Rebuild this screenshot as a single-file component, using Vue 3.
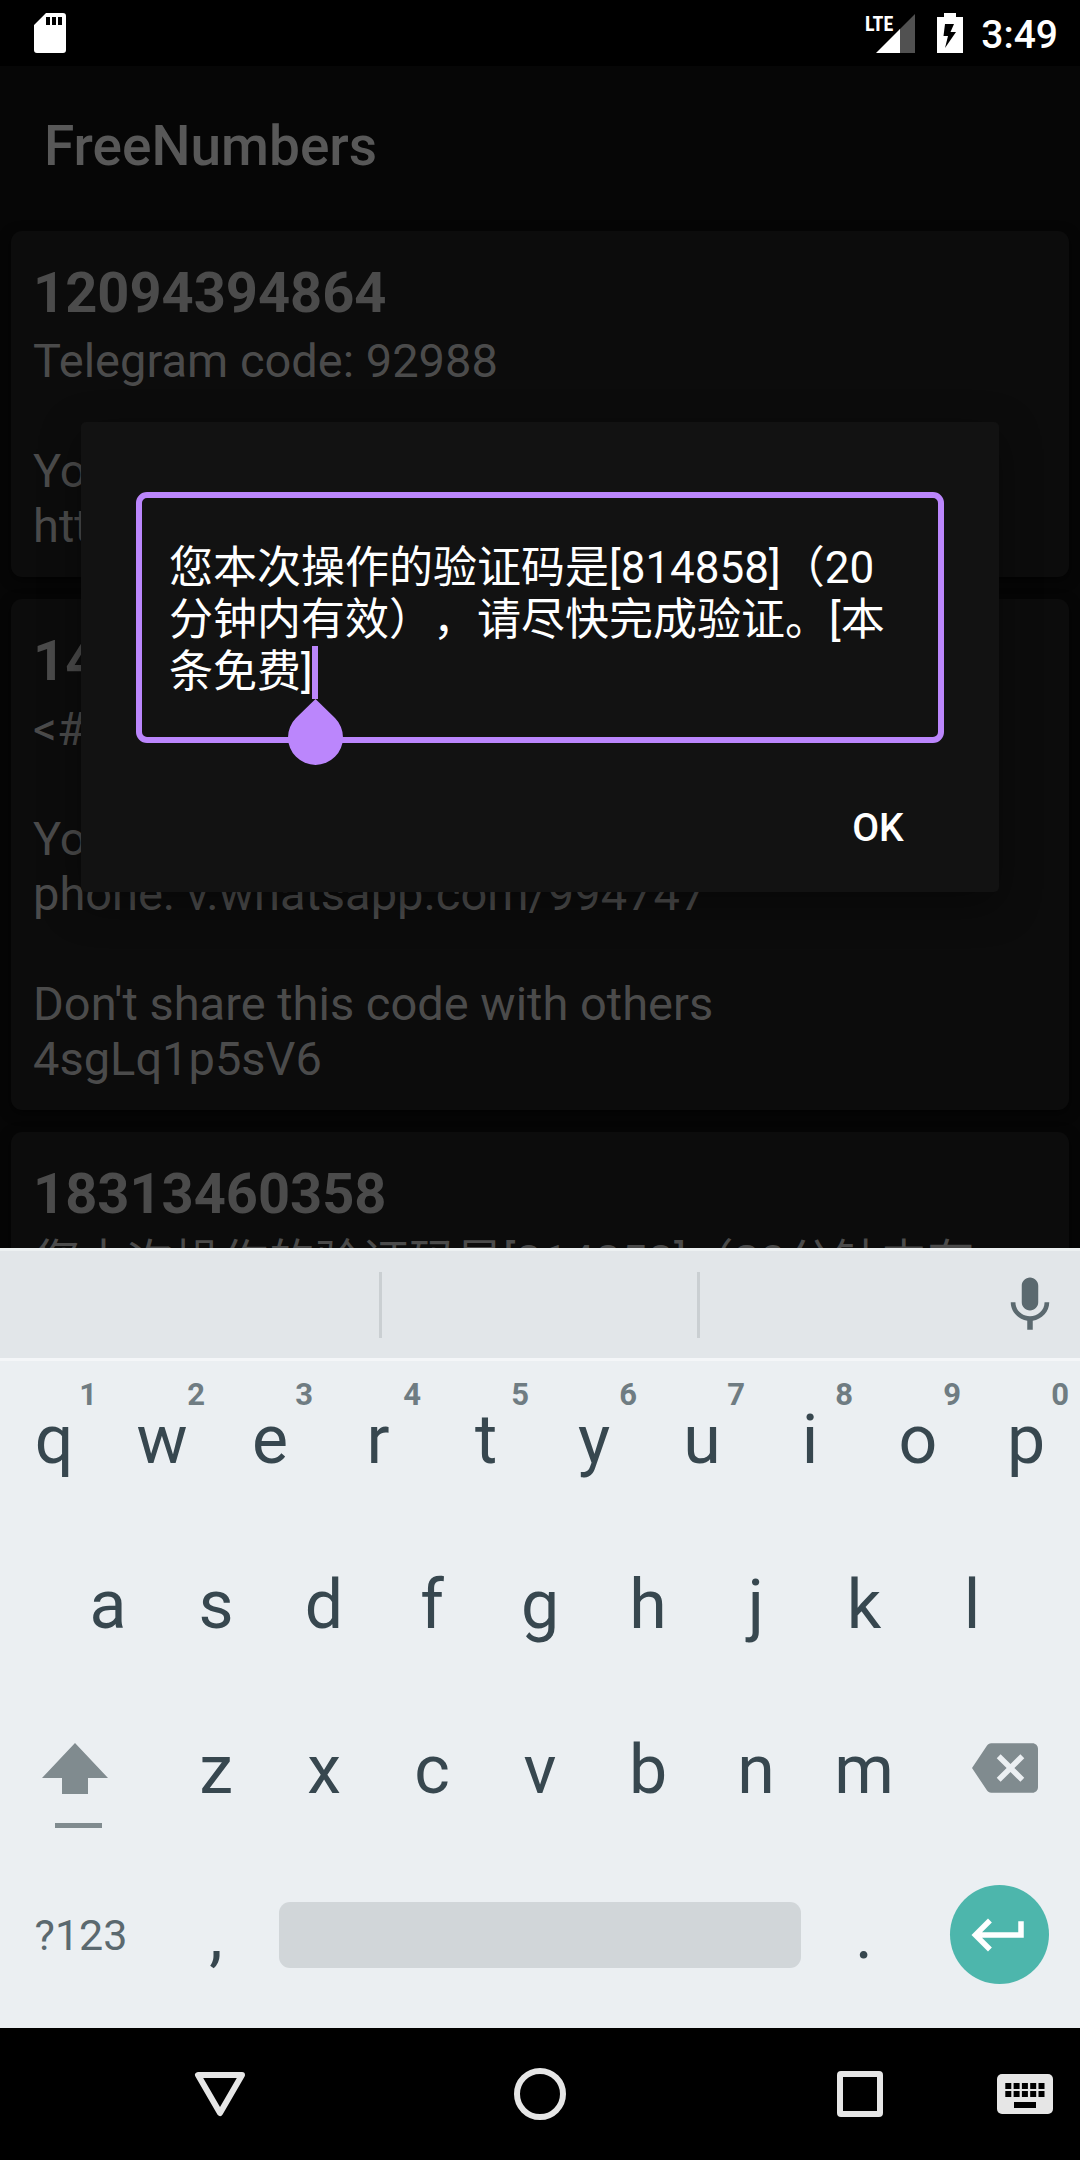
<script setup>
import { ref } from 'vue'

const messages = [
  {
    number: '12094394864',
    body: 'Telegram code: 92988\n\nYou can also tap on this link to log in:\nhttps://t.me/login/92988',
  },
  {
    number: '14094394864',
    body: "<#> WhatsApp code: 994-747\n\nYou can tap this link to verify your\nphone: v.whatsapp.com/994747\n\nDon't share this code with others\n4sgLq1p5sV6",
  },
  {
    number: '18313460358',
    body: '您本次操作的验证码是[814858]（20分钟内有效），请尽快完成验证。[本条免费]',
  },
]

const draft = ref('您本次操作的验证码是[814858]（20分钟内有效），请尽快完成验证。[本条免费]')

const topRow = [...'qwertyuiop'].map((letter, i) => ({ letter, hint: (i + 1) % 10 }))
const homeRow = [...'asdfghjkl']
const bottomRow = [...'zxcvbnm']
</script>

<template>
  <div class="screen">
    <header class="status">
      <svg class="sd" viewBox="0 0 32 40" aria-label="SD card">
        <path fill="#fff" fill-rule="evenodd" d="M12 0H29Q32 0 32 3V37Q32 40 29 40H3Q0 40 0 37V12ZM12 4V12H16V4ZM18 4V12H22V4ZM24 4V12H28V4Z" />
      </svg>
      <div class="indicators">
        <div class="signal">
          <svg viewBox="0 0 39 39" aria-hidden="true">
            <path fill="#515151" d="M39 0V39H23V16Z" />
            <path fill="#fff" d="M24 15V39H0Z" />
          </svg>
          <span class="lte">LTE</span>
        </div>
        <svg class="battery" viewBox="0 0 26 40" aria-label="Charging">
          <path fill="#fff" d="M7 0H19V4H26V40H0V4H7Z" />
          <path fill="#000" d="M8 11H17L13.500 19H19L8 35L11 23H6.500Z" />
        </svg>
        <time class="clock">3:49</time>
      </div>
    </header>

    <main class="app">
      <h1 class="title">FreeNumbers</h1>
      <section class="list">
        <article v-for="m in messages" :key="m.number" class="card">
          <h2 class="number">{{ m.number }}</h2>
          <p class="body">{{ m.body }}</p>
        </article>
      </section>

      <div class="overlay">
        <div class="dialog" role="dialog" aria-label="Message">
          <div class="field">
            <textarea v-model="draft" class="input" rows="3" aria-label="Message text" spellcheck="false"></textarea>
            <span class="caret"></span>
            <svg class="handle" viewBox="0 0 55 66" aria-hidden="true">
              <path fill="#bb86fc" d="M27.500 0L47 19A27.500 27.500 0 1 1 8 19Z" />
            </svg>
          </div>
          <div class="actions">
            <button type="button" class="ok">OK</button>
          </div>
        </div>
      </div>
    </main>

    <section class="keyboard" aria-label="Keyboard">
      <div class="suggestions">
        <span class="slot"></span>
        <span class="slot"></span>
        <button type="button" class="mic" aria-label="Voice input">
          <svg class="icon" viewBox="0 0 24 24">
            <path fill="#5b696f" d="M12 14c1.660 0 2.990-1.340 2.990-3L15 5c0-1.660-1.340-3-3-3S9 3.340 9 5v6c0 1.660 1.340 3 3 3zm5.300-3c0 3-2.540 5.100-5.300 5.100S6.700 14 6.700 11H5c0 3.410 2.720 6.230 6 6.720V21h2v-3.280c3.280-.48 6-3.300 6-6.720h-1.700z" />
          </svg>
        </button>
      </div>
      <div class="row">
        <button v-for="k in topRow" :key="k.letter" type="button" class="key">
          {{ k.letter }}<span class="hint">{{ k.hint }}</span>
        </button>
      </div>
      <div class="row home-row">
        <button v-for="k in homeRow" :key="k" type="button" class="key">{{ k }}</button>
      </div>
      <div class="row">
        <button type="button" class="key wide shift" aria-label="Shift">
          <svg class="shift-icon" viewBox="0 0 66 86">
            <path fill="#808b8f" d="M33 0L66 35H46V51H20V35H0ZM13 80H60V85H13Z" />
          </svg>
        </button>
        <button v-for="k in bottomRow" :key="k" type="button" class="key">{{ k }}</button>
        <button type="button" class="key wide backspace" aria-label="Backspace">
          <svg class="icon" viewBox="0 0 24 24">
            <path fill="#808b8f" d="M22 3H7c-.69 0-1.230.35-1.590.88L0 12l5.410 8.110c.36.53.9.89 1.590.89h15c1.100 0 2-.9 2-2V5c0-1.100-.9-2-2-2zm-3 12.590L17.590 17 14 13.410 10.410 17 9 15.590 12.590 12 9 8.410 10.410 7 14 10.590 17.590 7 19 8.410 15.410 12 19 15.590z" />
          </svg>
        </button>
      </div>
      <div class="row">
        <button type="button" class="key wide symbols">?123</button>
        <button type="button" class="key">,</button>
        <button type="button" class="key space" aria-label="Space"><span class="space-bar"></span></button>
        <button type="button" class="key">.</button>
        <button type="button" class="key wide" aria-label="Enter">
          <span class="enter">
            <svg class="icon" viewBox="0 0 24 24">
              <path fill="#fff" d="M19 7v4H5.830l3.580-3.590L8 6l-6 6 6 6 1.410-1.410L5.830 13H21V7z" />
            </svg>
          </span>
        </button>
      </div>
    </section>

    <nav class="nav">
      <button type="button" class="nav-button back" aria-label="Back">
        <svg width="52" height="46" viewBox="0 0 52 46">
          <path fill="none" stroke="#e6e6e6" stroke-width="6" stroke-linejoin="round" d="M4 4H48L26 42Z" />
        </svg>
      </button>
      <button type="button" class="nav-button" aria-label="Home">
        <svg width="52" height="52" viewBox="0 0 52 52">
          <circle cx="26" cy="26" r="23" fill="none" stroke="#e6e6e6" stroke-width="6" />
        </svg>
      </button>
      <button type="button" class="nav-button" aria-label="Recent apps">
        <svg width="46" height="46" viewBox="0 0 46 46">
          <rect x="3" y="3" width="40" height="40" rx="1" fill="none" stroke="#e6e6e6" stroke-width="6" stroke-linejoin="round" />
        </svg>
      </button>
      <button type="button" class="nav-button" aria-label="Switch keyboard">
        <svg width="56" height="40" viewBox="0 0 56 40">
          <rect width="56" height="40" rx="5" fill="#e6e6e6" />
          <template v-for="c in 5" :key="c">
            <rect :x="c * 8.3" y="9" width="6" height="6" />
            <rect :x="c * 8.3" y="17" width="6" height="6" />
          </template>
          <rect x="17" y="28" width="22" height="6" />
        </svg>
      </button>
    </nav>
  </div>
</template>

<style>
body {
  background: #000;
}
</style>

<style scoped>
.screen {
  display: flex;
  flex-direction: column;
  height: 100vh;
  font-family: Roboto, "Noto Sans CJK SC", sans-serif;
  text-spacing-trim: space-all;
  background: #000;
  overflow: hidden;
}

button {
  margin: 0;
  padding: 0;
  border: 0;
  background: none;
  font-family: inherit;
  color: inherit;
}

svg {
  display: block;
}

.status {
  flex: none;
  display: flex;
  align-items: center;
  justify-content: space-between;
  height: 66px;
  padding: 0 22px 0 34px;
  box-sizing: border-box;
  color: #fff;
}

.sd {
  width: 32px;
  height: 40px;
}

.indicators {
  display: flex;
  align-items: center;
  gap: 22px;
}

.signal {
  position: relative;
}

.signal svg {
  width: 39px;
  height: 39px;
}

.lte {
  position: absolute;
  top: 0;
  right: 22px;
  font: bold 20px/20px "Roboto Condensed", "Liberation Sans Narrow", Roboto, sans-serif;
}

.battery {
  width: 26px;
  height: 40px;
}

.clock {
  padding-top: 3px;
  font-size: 39px;
  font-weight: 500;
  line-height: 46px;
  margin-left: -4px;
}

.app {
  flex: 1 1 0;
  min-height: 0;
  position: relative;
  overflow: hidden;
  background: #060606;
}

.title {
  margin: 0;
  padding: 0 44px;
  font-size: 55px;
  font-weight: 500;
  line-height: 160px;
  color: #585858;
}

.list {
  display: flex;
  flex-direction: column;
  gap: 22px;
  padding: 5px 11px;
}

.card {
  padding: 22px 22px 24px;
  border-radius: 11px;
  background: #0c0c0c;
  box-shadow: 0 3px 12px rgba(0, 0, 0, 0.6);
  color: #4b4b4b;
}

.number {
  margin: 0;
  font-size: 56px;
  font-weight: 700;
  line-height: 80px;
}

.body {
  margin: 0;
  font-size: 47px;
  line-height: 55px;
  white-space: pre-line;
}

.overlay {
  position: absolute;
  inset: 0;
  display: flex;
  align-items: center;
  padding: 0 81px;
}

.dialog {
  flex: 1;
  padding: 70px 55px 15px;
  border-radius: 5px;
  background: #121212;
  box-shadow: 0 12px 40px rgba(0, 0, 0, 0.4);
}

.field {
  position: relative;
}

.input {
  display: block;
  width: 100%;
  box-sizing: border-box;
  margin: 0;
  padding: 44px 27px 39px;
  border: 6px solid #bb86fc;
  border-radius: 11px;
  outline: 0;
  background: transparent;
  color: #fff;
  font-family: inherit;
  font-size: 44px;
  line-height: 52px;
  text-spacing-trim: space-all;
  resize: none;
  overflow: hidden;
}

.caret {
  position: absolute;
  left: 176px;
  top: 154px;
  width: 6px;
  height: 53px;
  background: #bb86fc;
}

.handle {
  position: absolute;
  left: 152px;
  top: 207px;
  width: 55px;
  height: 66px;
}

.actions {
  display: flex;
  justify-content: flex-end;
  margin: 35px -22px 0;
}

.ok {
  width: 176px;
  height: 99px;
  font-size: 39px;
  font-weight: 500;
  color: #fff;
}

.keyboard {
  flex: none;
  padding-bottom: 7px;
  background: #ebeff2;
  color: #37474f;
}

.suggestions {
  display: grid;
  grid-template-columns: 382fr 318fr 380fr;
  align-items: center;
  height: 113px;
  box-sizing: border-box;
  border-top: 3px solid #edf1f2;
  border-bottom: 3px solid #f4f6f8;
  background: #e2e6e9;
}

.slot {
  height: 66px;
  border-right: 3px solid #cacfd2;
}

.mic {
  justify-self: end;
  padding-right: 17px;
}

.icon {
  width: 66px;
  height: 66px;
}

.row {
  display: flex;
}

.home-row {
  padding: 0 5%;
}

.key {
  position: relative;
  flex: 2 1 0;
  display: flex;
  align-items: center;
  justify-content: center;
  min-width: 0;
  height: 165px;
  padding-bottom: 8px;
  font-size: 68px;
  line-height: 80px;
}

.wide {
  flex-grow: 3;
}

.shift {
  align-items: flex-start;
  padding-top: 52px;
}

.shift-icon {
  width: 66px;
  height: 86px;
  margin-right: 12px;
}

.backspace {
  padding-bottom: 11px;
}

.backspace .icon {
  margin-left: 12px;
}

.hint {
  position: absolute;
  top: 16px;
  right: 11px;
  font-size: 31px;
  font-weight: 700;
  line-height: 36px;
  color: #6f7c82;
}

.symbols {
  font-size: 43px;
  color: #5b696f;
}

.space {
  flex-grow: 10;
}

.space-bar {
  flex: 1;
  height: 66px;
  margin: 0 9px;
  border-radius: 11px;
  background: #d1d6d9;
}

.enter {
  display: flex;
  align-items: center;
  justify-content: center;
  width: 99px;
  height: 99px;
  border-radius: 50%;
  background: #4db6ac;
}

.nav {
  flex: none;
  display: grid;
  grid-template-columns: 110fr 220fr 420fr 220fr 110fr;
  height: 132px;
  background: #000;
}

.nav-button {
  display: flex;
  align-items: center;
  justify-content: center;
}

.back {
  grid-column: 2;
}
</style>
